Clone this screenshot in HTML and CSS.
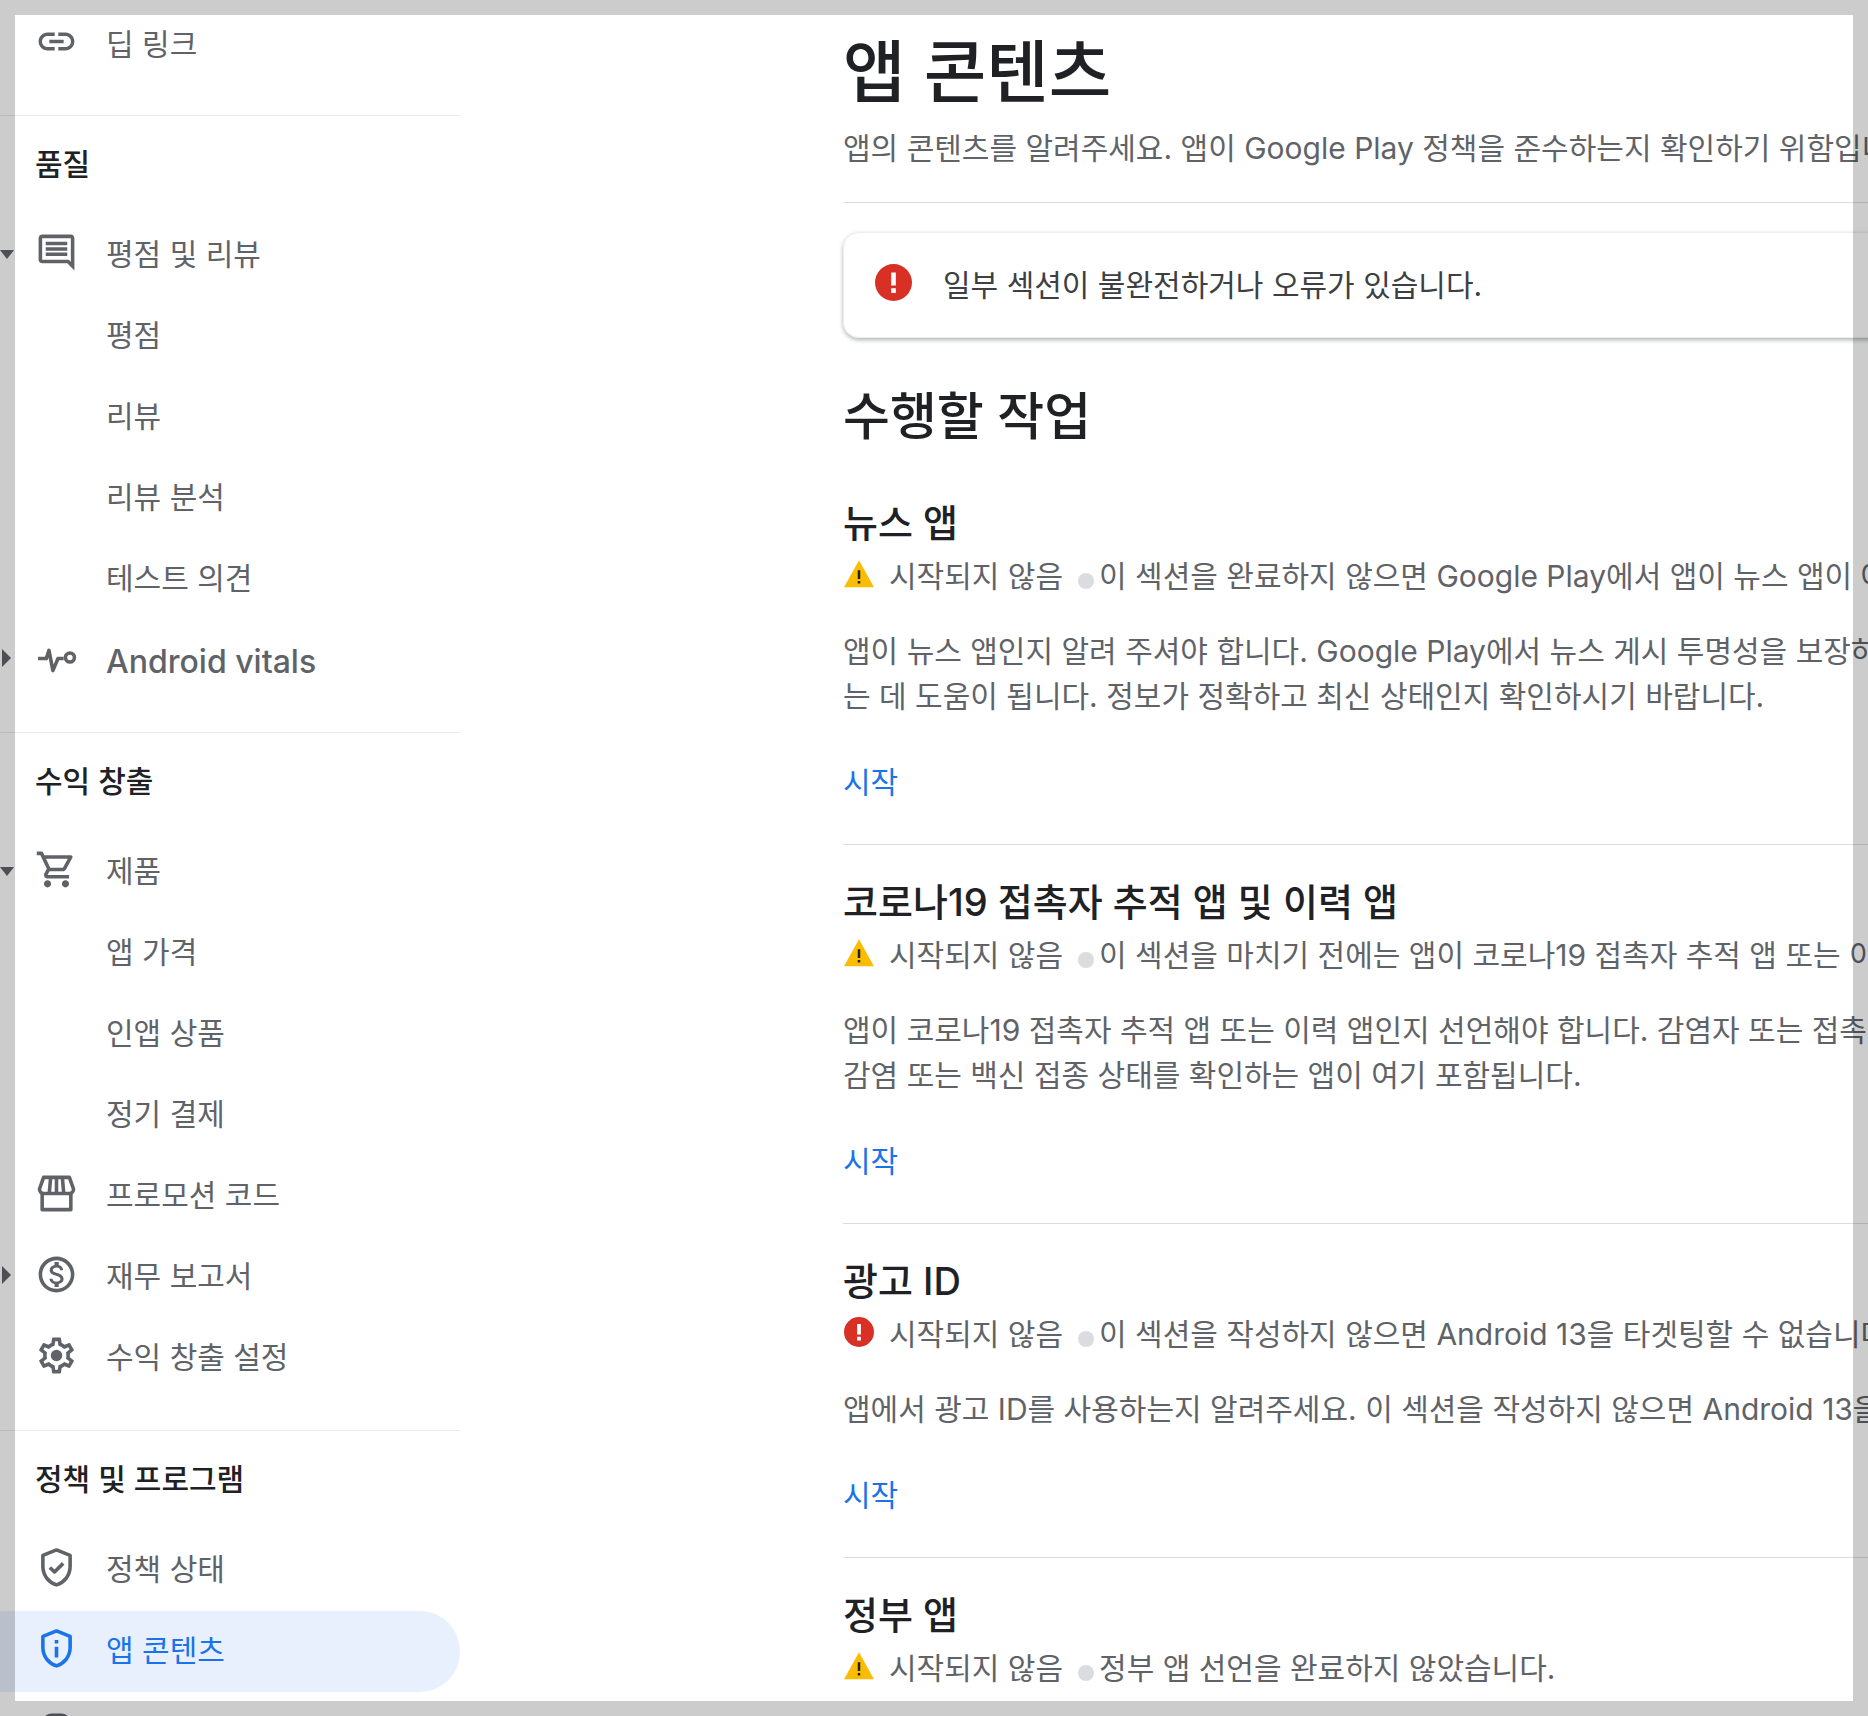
FILE: index.html
```html
<!DOCTYPE html>
<html lang="ko">
<head>
<meta charset="utf-8">
<title>앱 콘텐츠</title>
<link rel="stylesheet" href="styles.css">
</head>
<body>
<div class="page">
  <aside class="side">
    <div class="group first">
      <a class="row"><svg class="ic" viewBox="0 0 24 24"><path d="M3.9 12c0-1.71 1.39-3.1 3.1-3.1h4V7H7c-2.76 0-5 2.24-5 5s2.24 5 5 5h4v-1.9H7c-1.71 0-3.1-1.39-3.1-3.1zM8 13h8v-2H8v2zm9-6h-4v1.9h4c1.71 0 3.1 1.39 3.1 3.1s-1.39 3.1-3.1 3.1h-4V17h4c2.76 0 5-2.24 5-5s-2.24-5-5-5z"/></svg><span>딥 링크</span></a>
    </div>
    <div class="group">
      <div class="head">품질</div>
      <a class="row"><i class="arrow down"></i><svg class="ic" viewBox="0 0 24 24"><path d="M21.99 4c0-1.1-.89-2-1.99-2H4c-1.1 0-2 .9-2 2v12c0 1.1.9 2 2 2h14l4 4-.01-18zM20 4v13.17L18.83 16H4V4h16zM6 12h12v2H6zm0-3h12v2H6zm0-3h12v2H6z"/></svg><span>평점 및 리뷰</span></a>
      <a class="row sub"><span>평점</span></a>
      <a class="row sub"><span>리뷰</span></a>
      <a class="row sub"><span>리뷰 분석</span></a>
      <a class="row sub"><span>테스트 의견</span></a>
      <a class="row"><i class="arrow right"></i><svg class="ic" viewBox="0 0 24 24"><path class="ln" d="M1.700 12.600H6.300L7.800 8 10 19.300 12.800 12.600H16"/><circle class="ln" cx="19.500" cy="12" r="2.500"/></svg><span class="latin">Android vitals</span></a>
    </div>
    <div class="group">
      <div class="head">수익 창출</div>
      <a class="row"><i class="arrow down"></i><svg class="ic" viewBox="0 0 24 24"><path d="M15.55 13c.75 0 1.41-.41 1.75-1.03l3.58-6.49c.37-.66-.11-1.48-.87-1.48H5.21l-.94-2H1v2h2l3.6 7.59-1.35 2.44C4.52 15.37 5.48 17 7 17h12v-2H7l1.1-2h7.45zM6.16 6h12.15l-2.76 5H8.53L6.16 6zM7 18c-1.1 0-1.99.9-1.99 2S5.9 22 7 22s2-.9 2-2-.9-2-2-2zm10 0c-1.1 0-1.99.9-1.99 2s.89 2 1.99 2 2-.9 2-2-.9-2-2-2z"/></svg><span>제품</span></a>
      <a class="row sub"><span>앱 가격</span></a>
      <a class="row sub"><span>인앱 상품</span></a>
      <a class="row sub"><span>정기 결제</span></a>
      <a class="row"><svg class="ic" viewBox="0 0 24 24"><path class="ln" d="M4.800 3h14.400l2.300 6.500c0 1.500-1 2.500-2.300 2.500H4.800c-1.300 0-2.300-1-2.300-2.500z"/><path class="ln" d="M4 12v9h16v-9M8.700 3.500L8 11.500M15.300 3.500l.7 8M12 3.500v8"/></svg><span>프로모션 코드</span></a>
      <a class="row"><i class="arrow right"></i><svg class="ic" viewBox="0 0 24 24"><path d="M12 2C6.48 2 2 6.48 2 12s4.48 10 10 10 10-4.48 10-10S17.52 2 12 2zm0 18c-4.41 0-8-3.59-8-8s3.59-8 8-8 8 3.59 8 8-3.59 8-8 8zm.31-8.86c-1.77-.45-2.34-.94-2.34-1.67 0-.84.79-1.43 2.1-1.43 1.38 0 1.9.66 1.94 1.64h1.71c-.05-1.34-.87-2.57-2.49-2.97V5H10.9v1.69c-1.51.32-2.72 1.3-2.72 2.81 0 1.79 1.49 2.69 3.66 3.21 1.95.46 2.34 1.15 2.34 1.87 0 .53-.39 1.39-2.1 1.39-1.6 0-2.23-.72-2.32-1.64H8.04c.1 1.7 1.36 2.66 2.86 2.97V19h2.34v-1.67c1.52-.29 2.72-1.16 2.73-2.77-.01-2.2-1.9-2.96-3.66-3.42z"/></svg><span>재무 보고서</span></a>
      <a class="row"><svg class="ic" viewBox="0 0 24 24"><path d="M19.43 12.98c.04-.32.07-.64.07-.98 0-.34-.03-.66-.07-.98l2.11-1.65c.19-.15.24-.42.12-.64l-2-3.46c-.09-.16-.26-.25-.44-.25-.06 0-.12.01-.17.03l-2.49 1c-.52-.4-1.08-.73-1.69-.98l-.38-2.65C14.46 2.18 14.25 2 14 2h-4c-.25 0-.46.18-.49.42l-.38 2.65c-.61.25-1.17.59-1.69.98l-2.49-1c-.06-.02-.12-.03-.18-.03-.17 0-.34.09-.43.25l-2 3.46c-.13.22-.07.49.12.64l2.11 1.65c-.04.32-.07.65-.07.98 0 .33.03.66.07.98l-2.11 1.65c-.19.15-.24.42-.12.64l2 3.46c.09.16.26.25.44.25.06 0 .12-.01.17-.03l2.49-1c.52.4 1.08.73 1.69.98l.38 2.65c.03.24.24.42.49.42h4c.25 0 .46-.18.49-.42l.38-2.65c.61-.25 1.17-.59 1.69-.98l2.49 1c.06.02.12.03.18.03.17 0 .34-.09.43-.25l2-3.46c.12-.22.07-.49-.12-.64l-2.11-1.65zm-1.98-1.71c.04.31.05.52.05.73 0 .21-.02.43-.05.73l-.14 1.13.89.7 1.08.84-.7 1.21-1.27-.51-1.04-.42-.9.68c-.43.32-.84.56-1.25.73l-1.06.43-.16 1.13-.2 1.35h-1.4l-.19-1.35-.16-1.13-1.06-.43c-.43-.18-.83-.41-1.23-.71l-.91-.7-1.06.43-1.27.51-.7-1.21 1.08-.84.89-.7-.14-1.13c-.03-.31-.05-.54-.05-.74s.02-.43.05-.73l.14-1.13-.89-.7-1.08-.84.7-1.21 1.27.51 1.04.42.9-.68c.43-.32.84-.56 1.25-.73l1.06-.43.16-1.13.2-1.35h1.39l.19 1.35.16 1.13 1.06.43c.43.18.83.41 1.23.71l.91.7 1.06-.43 1.27-.51.7 1.21-1.07.85-.89.7.14 1.13z"/><circle cx="12" cy="12" r="3.200"/></svg><span>수익 창출 설정</span></a>
    </div>
    <div class="group">
      <div class="head">정책 및 프로그램</div>
      <a class="row"><svg class="ic" viewBox="0 0 24 24"><path class="ln" d="M12 2.200l7.600 3v6.300c0 4.900-3.200 8.800-7.600 10.200-4.400-1.400-7.600-5.300-7.600-10.200V5.200z"/><path class="ln" d="M8.300 12l2.600 2.500 4.800-4.800"/></svg><span>정책 상태</span></a>
      <a class="row active"><svg class="ic" viewBox="0 0 24 24"><path class="ln" d="M12 2.200l7.600 3v6.300c0 4.900-3.200 8.800-7.600 10.200-4.400-1.400-7.600-5.300-7.600-10.200V5.200z"/><path d="M11 11h2v6h-2zM11 7.200h2v2h-2z"/></svg><span>앱 콘텐츠</span></a>
      <a class="row"><svg class="ic" viewBox="0 0 24 24"><path class="ln" d="M5 21V8c0-2 2-4 4-4h6c2 0 4 2 4 4v13z"/></svg><span>다음</span></a>
    </div>
  </aside>

  <main class="main">
    <h1 class="title">앱 콘텐츠</h1>
    <p class="intro">앱의 콘텐츠를 알려주세요. 앱이 Google Play 정책을 준수하는지 확인하기 위함입니다.</p>
    <hr class="rule intro-rule">
    <div class="notice">
      <svg class="err-big" viewBox="0 0 24 24"><circle class="red" cx="12" cy="12" r="12"/><path class="white" d="M10.500 5.500h3v8.500h-3zM10.500 15.800h3v3h-3z"/></svg>
      <span class="notice-text">일부 섹션이 불완전하거나 오류가 있습니다.</span>
    </div>
    <h2 class="todo">수행할 작업</h2>

    <section class="task">
      <h3>뉴스 앱</h3>
      <div class="status">
        <svg class="warn" viewBox="0 0 24 24"><path class="amber" d="M0 22.500h24L12 1z"/><path class="dark" d="M11 9h2v7h-2zM11 17.500h2v2h-2z"/></svg>
        <span class="state">시작되지 않음</span><i class="dot"></i><span>이 섹션을 완료하지 않으면 Google Play에서 앱이 뉴스 앱이 아닌 것으로 표시됩니다.</span>
      </div>
      <p class="desc">앱이 뉴스 앱인지 알려 주셔야 합니다. Google Play에서 뉴스 게시 투명성을 보장하<br>는 데 도움이 됩니다. 정보가 정확하고 최신 상태인지 확인하시기 바랍니다.</p>
      <a class="start">시작</a>
    </section>
    <hr class="rule">

    <section class="task">
      <h3>코로나19 접촉자 추적 앱 및 이력 앱</h3>
      <div class="status">
        <svg class="warn" viewBox="0 0 24 24"><path class="amber" d="M0 22.500h24L12 1z"/><path class="dark" d="M11 9h2v7h-2zM11 17.500h2v2h-2z"/></svg>
        <span class="state">시작되지 않음</span><i class="dot"></i><span>이 섹션을 마치기 전에는 앱이 코로나19 접촉자 추적 앱 또는 이력 앱인지 알 수 없습니다.</span>
      </div>
      <p class="desc">앱이 코로나19 접촉자 추적 앱 또는 이력 앱인지 선언해야 합니다. 감염자 또는 접촉자를 추적하거나 사용자의<br>감염 또는 백신 접종 상태를 확인하는 앱이 여기 포함됩니다.</p>
      <a class="start">시작</a>
    </section>
    <hr class="rule">

    <section class="task">
      <h3>광고 ID</h3>
      <div class="status">
        <svg class="warn" viewBox="0 0 24 24"><circle class="red" cx="12" cy="12" r="12"/><path class="white" d="M10.500 5.500h3v8.500h-3zM10.500 15.800h3v3h-3z"/></svg>
        <span class="state">시작되지 않음</span><i class="dot"></i><span>이 섹션을 작성하지 않으면 Android 13을 타겟팅할 수 없습니다.</span>
      </div>
      <p class="desc">앱에서 광고 ID를 사용하는지 알려주세요. 이 섹션을 작성하지 않으면 Android 13을 타겟팅할 수 없습니다.</p>
      <a class="start">시작</a>
    </section>
    <hr class="rule">

    <section class="task">
      <h3>정부 앱</h3>
      <div class="status">
        <svg class="warn" viewBox="0 0 24 24"><path class="amber" d="M0 22.500h24L12 1z"/><path class="dark" d="M11 9h2v7h-2zM11 17.500h2v2h-2z"/></svg>
        <span class="state">시작되지 않음</span><i class="dot"></i><span>정부 앱 선언을 완료하지 않았습니다.</span>
      </div>
    </section>
  </main>
</div>
<div class="frame"></div>
</body>
</html>
```

FILE: styles.css
```css
* { box-sizing: border-box; }
html, body {
  margin: 0;
  height: 1716px;
  overflow: hidden;
  background: #fff;
}
body {
  font-family: Inter, "Noto Sans CJK KR", sans-serif;
  color: #5f6368;
  font-size: 30px;
}
.frame {
  position: fixed;
  inset: 0;
  border: 15px solid rgba(0, 0, 0, 0.2);
  pointer-events: none;
}
.page {
  display: flex;
  width: 1868px;
  height: 1716px;
  overflow: hidden;
}
.side {
  flex: 0 0 460px;
  padding-top: 3px;
}
.group {
  padding: 18px 0 31px;
  border-bottom: 1px solid #e8eaed;
}
.group.first { padding-top: 0; }
.group:last-child { border-bottom: 0; }
.head {
  height: 60px;
  line-height: 60px;
  margin-bottom: 21px;
  padding-left: 35px;
  color: #202124;
  font-weight: 500;
}
.row {
  position: relative;
  display: flex;
  align-items: center;
  gap: 28px;
  height: 81px;
  padding-left: 35px;
  padding-bottom: 7px;
  border-radius: 0 40px 40px 0;
}
.first .row { padding-bottom: 4px; }
.row.sub { padding-left: 106px; }
.row.active {
  background: #e8f0fe;
  color: #1a73e8;
}
.latin { font-size: 32px; font-weight: 500; margin-top: 8px; }
.ic {
  flex: none;
  width: 43px;
  height: 43px;
  fill: currentColor;
}
.ic .ln {
  fill: none;
  stroke: currentColor;
  stroke-width: 2;
  stroke-linejoin: round;
}
.arrow {
  position: absolute;
  left: 0;
  top: 35px;
  width: 0;
  height: 0;
}
.arrow.down {
  border-left: 7px solid transparent;
  border-right: 7px solid transparent;
  border-top: 9px solid #5f6368;
}
.arrow.right {
  left: 2px;
  top: 29px;
  border-top: 9px solid transparent;
  border-bottom: 9px solid transparent;
  border-left: 9px solid #5f6368;
}
.main {
  flex: 1 1 auto;
  min-width: 0;
  margin-left: 383px;
  padding-top: 36px;
  white-space: nowrap;
}
.title {
  margin: 0;
  font-size: 68px;
  line-height: 72px;
  font-weight: 500;
  color: #202124;
}
.intro {
  margin: 18px 0 0;
  line-height: 44px;
}
.rule {
  margin: 0;
  border: 0;
  border-top: 1px solid #dadce0;
}
.intro-rule { margin-top: 32px; }
.notice {
  display: flex;
  align-items: center;
  gap: 32px;
  height: 106px;
  margin-top: 29px;
  margin-right: -40px;
  padding-left: 32px;
  border: 1px solid #eeeeee;
  border-radius: 16px;
  box-shadow: 0 2px 4px rgba(60, 64, 67, 0.4);
  color: #3c4043;
}
.notice-text { margin-bottom: 4px; }
.err-big { flex: none; width: 37px; height: 37px; margin-top: -6px; margin-right: -1px; margin-left: -1px; }
.red { fill: #d93025; }
.white { fill: #fff; }
.amber { fill: #fbbc04; }
.dark { fill: #202124; }
.todo {
  margin: 49px 0 0;
  font-size: 51px;
  line-height: 60px;
  font-weight: 500;
  color: #202124;
}
.task { padding-top: 35px; padding-bottom: 40px; }
.todo + .task { padding-top: 54px; }
.task h3 {
  margin: 0;
  font-size: 38px;
  line-height: 44px;
  font-weight: 500;
  color: #202124;
}
.status {
  display: flex;
  align-items: center;
  margin-top: 7px;
  height: 44px;
}
.warn { flex: none; width: 30px; height: 30px; margin-left: 1px; margin-right: 15px; }
.dot {
  flex: none;
  width: 16px;
  height: 16px;
  margin: 14px 5px 0 15px;
  border-radius: 50%;
  background: #dadce0;
}
.desc {
  margin: 33px 0 0;
  line-height: 45px;
}
.start {
  display: block;
  margin-top: 41px;
  line-height: 44px;
  color: #1a73e8;
}
```
